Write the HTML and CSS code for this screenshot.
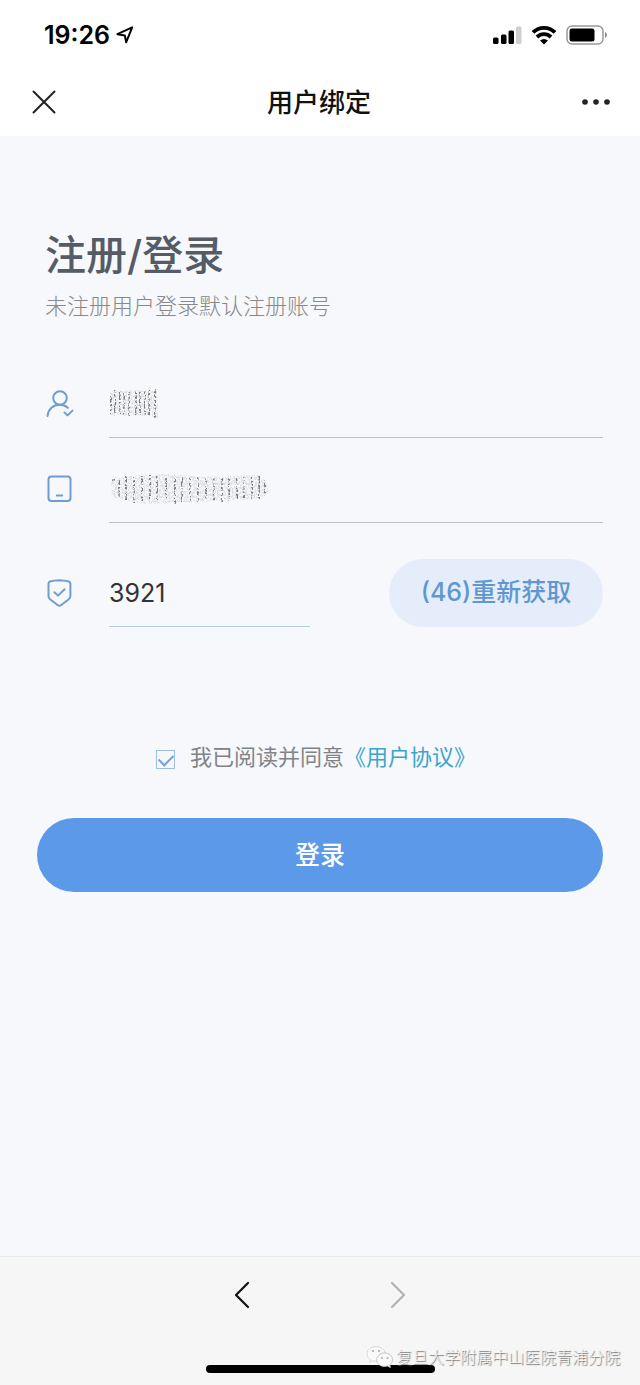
FILE: index.html
```html
<!DOCTYPE html>

<html lang="zh-CN">

    <head>
        <meta charset="UTF-8">
        <meta name="viewport" content="width=device-width, initial-scale=1.0">
        <title>用户绑定</title>
        <link rel="stylesheet" href="styles.css">
    </head>

    <body>
        <header class="top">
            <div class="statusBar">
                <div class="clock">
                    <span>19:26</span>
                    <svg width="18" height="18" viewBox="0 0 18 18" fill="none" stroke="#000" stroke-width="2" stroke-linejoin="round">
                        <path d="M1.4 8.2 L16.2 1.4 L10.2 16.2 L8.8 9.4 Z"/>
                    </svg>
                </div>
                <div class="statusIcons">
                    <svg width="30" height="20" viewBox="0 0 30 20">
                        <rect x="1" y="12.5" width="5.5" height="6.5" rx="1.5"/>
                        <rect x="9" y="9.5" width="5.5" height="9.5" rx="1.5"/>
                        <rect x="16.5" y="5.5" width="5.5" height="13.5" rx="1.5"/>
                        <rect x="24" y="1.5" width="5.5" height="17.5" rx="1.5" fill="#cfcfcf"/>
                    </svg>
                    <svg width="26" height="20" viewBox="0 0 26 20" fill="none" stroke="#000" stroke-width="3.8">
                        <path d="M2 7.4 C8.2 1.3 17.8 1.3 24 7.4"/>
                        <path d="M6 12 C10 8.2 16 8.2 20 12"/>
                        <path d="M13 19.5 L9 15.6 Q13 12.4 17 15.6 Z" fill="#000" stroke="none"/>
                    </svg>
                    <svg width="42" height="20" viewBox="0 0 42 20">
                        <rect x="1" y="1" width="36" height="18" rx="5" fill="none" stroke="#999" stroke-width="1.5"/>
                        <rect x="3.5" y="3.5" width="25" height="13" rx="2.5"/>
                        <path d="M39 7 Q41 8 41 10 Q41 12 39 13 Z" fill="#888"/>
                    </svg>
                </div>
            </div>
            <nav class="navBar">
                <button type="button" aria-label="关闭">
                    <svg width="24" height="24" viewBox="0 0 24 24" stroke="#222" stroke-width="2" stroke-linecap="round">
                        <path d="M1.5 1.5 L22.5 22.5 M22.5 1.5 L1.5 22.5"/>
                    </svg>
                </button>
                <h1>用户绑定</h1>
                <button type="button" aria-label="更多">
                    <svg width="28" height="8" viewBox="0 0 28 8" fill="#222">
                        <circle cx="3" cy="4" r="2.8"/>
                        <circle cx="14" cy="4" r="2.8"/>
                        <circle cx="25" cy="4" r="2.8"/>
                    </svg>
                </button>
            </nav>
        </header>

        <main class="page">
            <h2>注册/登录</h2>
            <p class="hint">未注册用户登录默认注册账号</p>

            <form class="loginForm">
                <div class="field">
                    <label for="name" aria-label="姓名">
                        <svg width="28" height="28" viewBox="0 0 28 28" fill="none" stroke="#6f9dd2" stroke-width="2" stroke-linecap="round" stroke-linejoin="round">
                            <circle cx="14" cy="8" r="6.8"/>
                            <path d="M1.5 26 C2.2 18.8 7.4 14.8 13.5 14.8 C16.8 14.8 19.7 15.8 21.8 17.8"/>
                            <path d="M18.5 22.5 L21.5 25.4 L26.5 20.6"/>
                        </svg>
                    </label>
                    <div class="entry">
                        <input type="text" id="name">
                        <!-- scribble hiding the name -->
                        <svg class="scribble" width="54" height="34" viewBox="0 0 54 34">
                            <filter id="grain" x="0" y="0" width="100%" height="100%">
                                <feTurbulence type="fractalNoise" baseFrequency="0.6 0.45" numOctaves="3" seed="4"/>
                                <feColorMatrix values="0 0 0 0 0.2  0 0 0 0 0.2  0 0 0 0 0.2  0 5 0 0 -2.1" result="noise"/>
                                <feGaussianBlur in="SourceGraphic" stdDeviation="0.7" result="soft"/>
                                <feComposite in="noise" in2="soft" operator="in"/>
                                <feGaussianBlur stdDeviation="0.4"/>
                            </filter>
                            <g filter="url(#grain)">
                                <rect width="54" height="34" fill="none"/>
                                <path d="M1 4 L48 3 L49 31 L41 29 L1 28 Z" fill="#000" fill-opacity="0.2"/>
                                <path d="M2 5 V27 M6 3 V29 M11 4 V27 M15 4 V28 M20 5 V29 M27 4 V28 M31 5 V28 M36 4 V29 M40 3 V28 M46 2 V31" stroke="#000" stroke-width="2"/>
                            </g>
                        </svg>
                    </div>
                </div>
                <div class="field">
                    <label for="phone" aria-label="手机号">
                        <svg width="28" height="28" viewBox="0 0 28 28" fill="none" stroke="#6f9dd2" stroke-width="2" stroke-linecap="round">
                            <rect x="2.5" y="1.5" width="22" height="24.5" rx="3"/>
                            <path d="M10.8 20.6 H16.2"/>
                        </svg>
                    </label>
                    <div class="entry">
                        <input type="tel" id="phone">
                        <svg class="scribble" width="162" height="34" viewBox="0 0 162 34">
                            <g filter="url(#grain)">
                                <rect width="162" height="34" fill="none"/>
                                <path d="M2 8 L20 4 L60 2 L90 5 L148 3 Q160 9 160 17 Q158 26 146 27 L80 30 L35 32 L3 25 Z" fill="#000" fill-opacity="0.2"/>
                                <path d="M3 9 L7 6 M10 8 V25 M17 4 V28 M25 5 V31 M33 3 V29 M41 3 V27 M48 4 V28 M57 6 V26 M66 5 V32 M73 5 V30 M81 6 V30 M89 5 V30 M97 6 V28 M105 6 V28 M113 5 V30 M120 5 V29 M128 6 V27 M135 5 V28 M143 5 V27 M150 4 V27 M156 8 V24" stroke="#000" stroke-width="2"/>
                            </g>
                        </svg>
                    </div>
                </div>
                <div class="field codeField">
                    <label for="code" aria-label="验证码">
                        <svg width="28" height="28" viewBox="0 0 28 28" fill="none" stroke="#6f9dd2" stroke-width="2" stroke-linecap="round" stroke-linejoin="round">
                            <path d="M13.4 1.2 Q18.7 1.3 22.8 2.5 Q24.4 3 24.4 4.6 V17 Q24.4 19 22.8 20.2 L15.2 26 Q13.4 27.3 11.6 26 L4 20.2 Q2.5 19 2.5 17 V4.6 Q2.5 3 4 2.5 Q8 1.3 13.4 1.2 Z"/>
                            <path d="M8.4 13.2 L12 16.6 L18.6 10.2"/>
                        </svg>
                    </label>
                    <div class="entry">
                        <input type="text" id="code" value="3921">
                    </div>
                    <button type="button" class="resend">(46)重新获取</button>
                </div>

                <div class="agree">
                    <input type="checkbox" id="agree" checked>
                    <label for="agree">我已阅读并同意</label><a href="#">《用户协议》</a>
                </div>

                <button type="submit" class="login">登录</button>
            </form>
        </main>

        <footer class="toolBar">
            <div class="arrows">
                <button type="button" aria-label="后退">
                    <svg width="16" height="28" viewBox="0 0 16 28" fill="none" stroke="#111" stroke-width="2.2" stroke-linecap="round" stroke-linejoin="round">
                        <path d="M14 2 L2 14 L14 26"/>
                    </svg>
                </button>
                <button type="button" aria-label="前进">
                    <svg width="16" height="28" viewBox="0 0 16 28" fill="none" stroke="#b2b2b2" stroke-width="2.2" stroke-linecap="round" stroke-linejoin="round">
                        <path d="M2 2 L14 14 L2 26"/>
                    </svg>
                </button>
            </div>
            <div class="homeBar"></div>
            <div class="watermark">
                <svg width="28" height="24" viewBox="0 0 28 24" fill="#f9f9f9" stroke="#c4c4c4" stroke-width="1">
                    <path d="M10 1.5 C4.8 1.5 1 4.8 1 8.8 C1 11.2 2.3 13.3 4.5 14.6 L3.8 17.4 L7 15.8 C8 16 9 16.2 10 16.2 C15.2 16.2 19 12.8 19 8.8 C19 4.8 15.2 1.5 10 1.5 Z" stroke="#dadada"/>
                    <path d="M18.5 8 C14 8 10.7 11 10.7 14.7 C10.7 18.5 14 21.4 18.5 21.4 C19.5 21.4 20.5 21.2 21.4 20.9 L24.4 22.5 L23.7 19.7 C25.5 18.5 26.5 16.7 26.5 14.7 C26.5 11 23 8 18.5 8 Z"/>
                    <g fill="#aaa" stroke="none">
                        <circle cx="7" cy="6" r="1.1"/>
                        <circle cx="13" cy="6" r="1.1"/>
                        <circle cx="16" cy="13" r="1"/>
                        <circle cx="21.5" cy="13" r="1"/>
                    </g>
                </svg>
                <span>复旦大学附属中山医院青浦分院</span>
            </div>
        </footer>
    </body>

</html>
```

FILE: styles.css
```css
* {
    box-sizing: border-box;
}

body {
    margin: 0px;
    min-height: 100vh;
    display: flex;
    flex-direction: column;
    background-color: #f6f8fc;
    font-family: Inter, "Noto Sans CJK SC", sans-serif;
}

button {
    padding: 0px;
    border: none;
    background: none;
    font-family: inherit;
    cursor: pointer;
}

svg {
    display: block;
}

.top {
    background-color: #ffffff;
}

.statusBar {
    height: 70px;
    padding: 0px 32px 0px 44px;
    display: flex;
    justify-content: space-between;
    align-items: center;
}

.clock {
    display: flex;
    align-items: center;
    gap: 6px;
    font-size: 25px;
    font-weight: 600;
}

.statusIcons {
    display: flex;
    gap: 9px;
}

.navBar {
    height: 66px;
    padding: 0px 30px 2px 32px;
    display: flex;
    justify-content: space-between;
    align-items: center;
}

.navBar h1 {
    margin: 0px;
    padding-top: 2px;
    font-size: 26px;
    line-height: 40px;
    font-weight: 500;
    color: #111111;
}

.page {
    flex: 1;
    padding: 89px 37px 40px;
}

.page h2 {
    margin: 0px 8px;
    font-size: 41px;
    line-height: 60px;
    font-weight: 500;
    color: #555c66;
}

.hint {
    margin: 5px 8px 0px;
    font-size: 22px;
    line-height: 32px;
    font-weight: 300;
    color: #888888;
}

.loginForm {
    margin-top: 48px;
}

.field {
    height: 85px;
    padding-left: 9px;
    display: flex;
    align-items: flex-end;
    gap: 35px;
}

.field:first-child {
    height: 68px;
}

.field label {
    padding-bottom: 20px;
}

.entry {
    flex: 1;
    position: relative;
    border-bottom: 1px solid #bfc2c6;
}

.entry input {
    display: block;
    width: 100%;
    height: 66px;
    padding: 0px;
    border: none;
    outline: none;
    background: none;
    font-family: inherit;
    font-size: 25px;
    color: #333333;
}

.scribble {
    position: absolute;
    left: 0px;
    bottom: 16px;
}

.codeField {
    height: 104px;
}

.codeField .entry {
    border-color: #b3d0d3;
}

.resend {
    flex: 0 0 214px;
    height: 68px;
    margin-left: 44px;
    padding-bottom: 6px;
    border-radius: 34px;
    background-color: #e6edfa;
    font-size: 25px;
    font-weight: 500;
    color: #5f97d1;
}

.agree {
    margin-top: 114px;
    padding-left: 119px;
    display: flex;
    align-items: center;
    font-size: 22px;
    line-height: 32px;
    color: #808489;
}

.agree input {
    appearance: none;
    width: 19px;
    height: 19px;
    margin: 4px 15px 0px 0px;
    border: 1px solid #9fbfe0;
    display: flex;
    justify-content: center;
}

.agree input:checked::after {
    content: "";
    width: 12px;
    height: 7px;
    margin-top: 3px;
    border-left: 2px solid #769fd8;
    border-bottom: 2px solid #769fd8;
    transform: rotate(-45deg);
}

.agree a {
    color: #3ba5c9;
    text-decoration: none;
}

.login {
    width: 100%;
    height: 74px;
    margin-top: 45px;
    padding-bottom: 4px;
    border-radius: 37px;
    background-color: #5c99e8;
    font-size: 25px;
    font-weight: 500;
    color: #ffffff;
}

.toolBar {
    position: relative;
    height: 129px;
    padding-bottom: 12px;
    display: flex;
    flex-direction: column;
    justify-content: space-between;
    align-items: center;
    border-top: 1px solid #e6e7e9;
    background-color: #f6f6f6;
}

.arrows {
    padding-top: 24px;
    display: flex;
    gap: 140px;
}

.homeBar {
    width: 229px;
    height: 8px;
    border-radius: 4px;
    background-color: #000000;
}

.watermark {
    position: absolute;
    right: 20px;
    bottom: 16px;
    display: flex;
    align-items: center;
    gap: 2px;
    font-size: 16px;
    line-height: 24px;
    font-weight: 300;
    color: #f4f4f4;
    text-shadow: 1px 1px 1px #666666;
}
```
